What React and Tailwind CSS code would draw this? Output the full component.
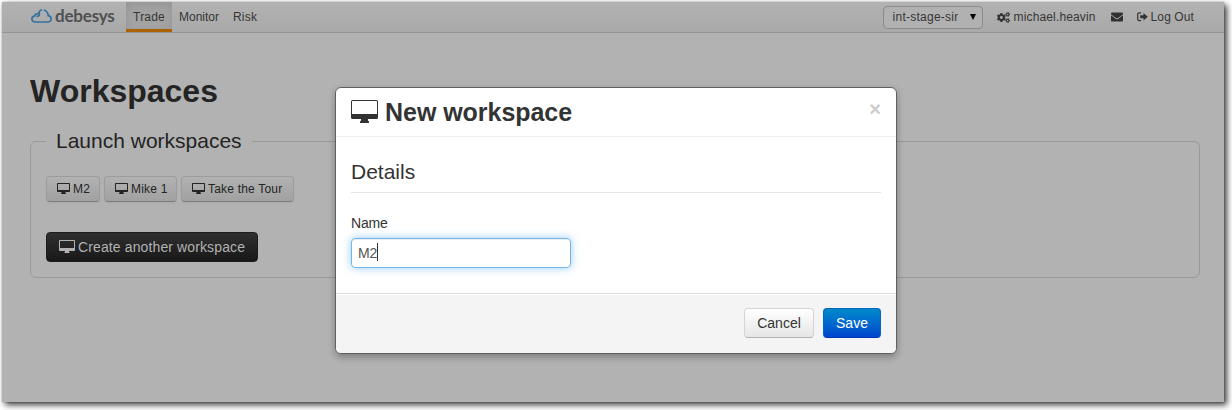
import React from "react";
import { FaCogs, FaEnvelope } from "react-icons/fa";

function DesktopLarge({ className }) {
  return (
    <svg viewBox="0 0 27 23" className={className} fill="currentColor">
      <path
        fillRule="evenodd"
        d="M1.500 0h24A1.500 1.500 0 0 1 27 1.500v16a1.500 1.500 0 0 1-1.500 1.500H17v1.500L18 21.500v1a.5.5 0 0 1-.5.5H9.500a.5.5 0 0 1-.5-.5v-1L10 20.500V19H1.500A1.500 1.500 0 0 1 0 17.500v-16A1.500 1.500 0 0 1 1.500 0zM1.500 1a.5.5 0 0 0-.5.5V14h25V1.500a.5.5 0 0 0-.5-.5z"
      />
    </svg>
  );
}

function DesktopSmall({ className }) {
  return (
    <svg viewBox="0 0 13 11" className={className} fill="currentColor">
      <path
        fillRule="evenodd"
        d="M.7 0h11.600a.7.7 0 0 1 .7.7v7.600a.7.7 0 0 1-.7.7H8.500v1l.5.5v.5H4v-.5l.5-.5V9H.7a.7.7 0 0 1-.7-.7V.7A.7.7 0 0 1 .7 0zM1 1v6h11V1z"
      />
    </svg>
  );
}

function DesktopMedium({ className }) {
  return (
    <svg viewBox="0 0 16 13" className={className} fill="currentColor">
      <path
        fillRule="evenodd"
        d="M.8 0h14.400a.8.8 0 0 1 .8.8v9.400a.8.8 0 0 1-.8.8H10v1l.7.5v.5H5.300v-.5L6 12v-1H.8a.8.8 0 0 1-.8-.8V.8A.8.8 0 0 1 .8 0zM1 1v7h14V1z"
      />
    </svg>
  );
}

function CloudLogo() {
  return (
    <svg viewBox="0 0 21 14" className="mt-px h-[14px] w-[21px] shrink-0" fill="none" stroke="#35719f" strokeWidth="1.700" strokeLinecap="round">
      <path d="M6.300 4.900C5 4.700 4 5.500 3.900 6.800C2 7 .9 8.200 .9 9.800C.9 11.700 2.400 13 4.500 13H16.500C18.800 13 20.100 11.700 20.100 9.800C20.100 8.100 19 6.900 17.200 6.700C17.200 4.200 15.800 2.100 13.400 1.200" />
      <path d="M6.300 7.400C7.700 7 8.500 6.100 8.400 4.700" />
      <path d="M7.900 3.400C8.300 2.200 9.200 1.400 10.300 1" />
      <circle cx="8.100" cy="4" r="1.100" fill="#35719f" stroke="none" />
    </svg>
  );
}

function SignOut() {
  return (
    <svg viewBox="0 0 11 10" className="h-[10px] w-[11px]">
      <path d="M4 .8H2.300A1.600 1.600 0 0 0 .7 2.400v4.700a1.600 1.600 0 0 0 1.600 1.600H4" fill="none" stroke="#333" strokeWidth="1.200" />
      <path d="M3.200 3.300h3.300V1L10.800 4.800 6.500 8.600V6.300H3.200z" fill="#333" />
    </svg>
  );
}

function SmallButton({ children, width }) {
  return (
    <button
      className={`${width} flex h-[26px] items-center rounded-[4px] border border-[#9c9c9c] border-b-[#7d7d7d] bg-linear-to-b from-[#b2b2b2] to-[#a1a1a1] pl-[10px] text-[12px] text-[#242424] shadow-[0_1px_2px_rgba(0,0,0,0.06)]`}
    >
      <DesktopSmall className="mr-[3px] mb-[2px] h-[11px] w-[13px] shrink-0" />
      <span className="whitespace-nowrap tracking-[0.2px]">{children}</span>
    </button>
  );
}

function Navbar() {
  return (
    <nav className="flex h-[31px] border-b border-[#949494] bg-linear-to-b from-[#b2b2b2] to-[#a9a9a9] text-[12px] text-[#363636]">
      <div className="flex w-[124px] pt-[6px] pl-[29px]">
        <CloudLogo />
        <span className="ml-[3px] font-['Lato'] text-[17px] leading-[16px] font-bold tracking-[-0.200px] text-[#4f5153]">debesys</span>
      </div>
      <div className="h-[30px] w-[46px] border-b-[3px] border-[#ab6200] bg-[#a3a3a3] text-center leading-[30px] tracking-[0.2px] shadow-[inset_0_3px_8px_rgba(0,0,0,0.09)]">
        Trade
      </div>
      <div className="ml-[7px] w-[54px] leading-[30px]">Monitor</div>
      <div className="leading-[30px] tracking-[0.2px]">Risk</div>
      <div className="ml-auto flex items-center pr-[30px]">
        <div className="mr-[14px] flex h-[23px] w-[100px] items-center rounded-[4px] border border-[#8b8b8b] bg-[#b1b1b1] pl-[9px]">
          <span className="w-[65px] overflow-hidden leading-[20px] tracking-[0.250px] whitespace-nowrap">int-stage-sim</span>
          <svg viewBox="0 0 6 6" className="ml-[12px] h-[6px] w-[6px]">
            <path d="M0 0h6L3 6z" fill="#000" />
          </svg>
        </div>
        <FaCogs className="mr-[4px] h-[13px] w-[13px] text-[#333]" />
        <span className="w-[97px] leading-[29px] tracking-[0.140px]">michael.heavin</span>
        <FaEnvelope className="mr-[14px] h-[12px] w-[12px] text-[#303030]" />
        <SignOut />
        <span className="ml-[3px] leading-[29px] tracking-[0.100px]">Log Out</span>
      </div>
    </nav>
  );
}

function Dialog() {
  return (
    <section className="absolute top-[87px] left-[335px] flex h-[267px] w-[562px] flex-col overflow-hidden rounded-[6px] border border-[#606060] bg-white text-[14px] text-[#333] shadow-[0_3px_7px_rgba(0,0,0,0.3)]">
      <header className="flex h-[49px] shrink-0 items-start border-b border-[#eee] pr-[15px] pl-[15px]">
        <DesktopLarge className="mt-[12px] h-[23px] w-[27px]" />
        <h3 className="ml-[7px] text-[25px] leading-[48px] font-bold tracking-[-0.040px]">New workspace</h3>
        <span className="mt-[11px] ml-auto text-[20px] leading-[20px] font-bold text-[#ccc]">×</span>
      </header>
      <div className="flex h-[156px] shrink-0 flex-col px-[15px]">
        <h4 className="h-[56px] border-b border-[#e5e5e5] pt-[15px] text-[21px] leading-[40px]">Details</h4>
        <label className="mt-[20px] leading-[20px] tracking-[-0.200px]">Name</label>
        <div className="mt-[5px] flex h-[30px] w-[220px] items-center rounded-[4px] border border-[#71b7ec] pl-[6px] text-[#555] shadow-[inset_0_1px_1px_rgba(0,0,0,0.075),0_0_8px_rgba(82,168,236,0.6)]">
          <span className="tracking-[-0.200px]">M2</span>
          <span className="mb-[2px] h-[18px] w-px bg-[#333]" />
        </div>
      </div>
      <footer className="flex flex-1 items-start justify-end gap-[9px] border-t border-[#ddd] bg-[#f4f4f4] pt-[14px] pr-[15px] shadow-[inset_0_1px_0_#fff]">
        <button className="h-[30px] w-[70px] rounded-[4px] border border-[#d4d4d4] border-b-[#b3b3b3] bg-linear-to-b from-white to-[#e6e6e6] leading-[28px]">
          Cancel
        </button>
        <button className="h-[30px] w-[58px] rounded-[4px] border border-[#0067bb] border-b-[#003ab3] bg-linear-to-b from-[#0088cc] to-[#0044cc] leading-[28px] text-white">
          Save
        </button>
      </footer>
    </section>
  );
}

export default function App() {
  return (
    <div className="relative h-[410px] w-[1232px] overflow-hidden bg-white pt-[2px] pl-[2px] font-['Liberation_Sans',Arial,sans-serif]">
      <div className="h-[400px] w-[1222px] bg-[#b2b2b2] shadow-[3px_3px_6px_0px_rgba(0,0,0,0.75),0_0_2px_rgba(0,0,0,0.25)]">
        <Navbar />
        <main className="pr-[24px] pl-[28px] text-[#242424]">
          <h1 className="pt-[38px] text-[32px] leading-[40px] font-bold">Workspaces</h1>
          <fieldset className="mt-[10px] h-[157px] rounded-[6px] border border-[#999] px-[15px]">
            <legend className="px-[10px] text-[21px] leading-[40px]">Launch workspaces</legend>
            <div className="mt-[15px] flex gap-[4px]">
              <SmallButton width="w-[54px]">M2</SmallButton>
              <SmallButton width="w-[73px]">Mike 1</SmallButton>
              <SmallButton width="w-[113px]">Take the Tour</SmallButton>
            </div>
            <button className="mt-[30px] flex h-[30px] w-[212px] items-center rounded-[4px] border border-[#1c1c1c] bg-linear-to-b from-[#303030] to-[#181818] pl-[12px] text-[14px] text-[#b2b2b2]">
              <DesktopMedium className="mr-[3px] mb-[1px] h-[13px] w-[16px] shrink-0" />
              <span className="tracking-[0.120px] whitespace-nowrap">Create another workspace</span>
            </button>
          </fieldset>
        </main>
      </div>
      <Dialog />
    </div>
  );
}
